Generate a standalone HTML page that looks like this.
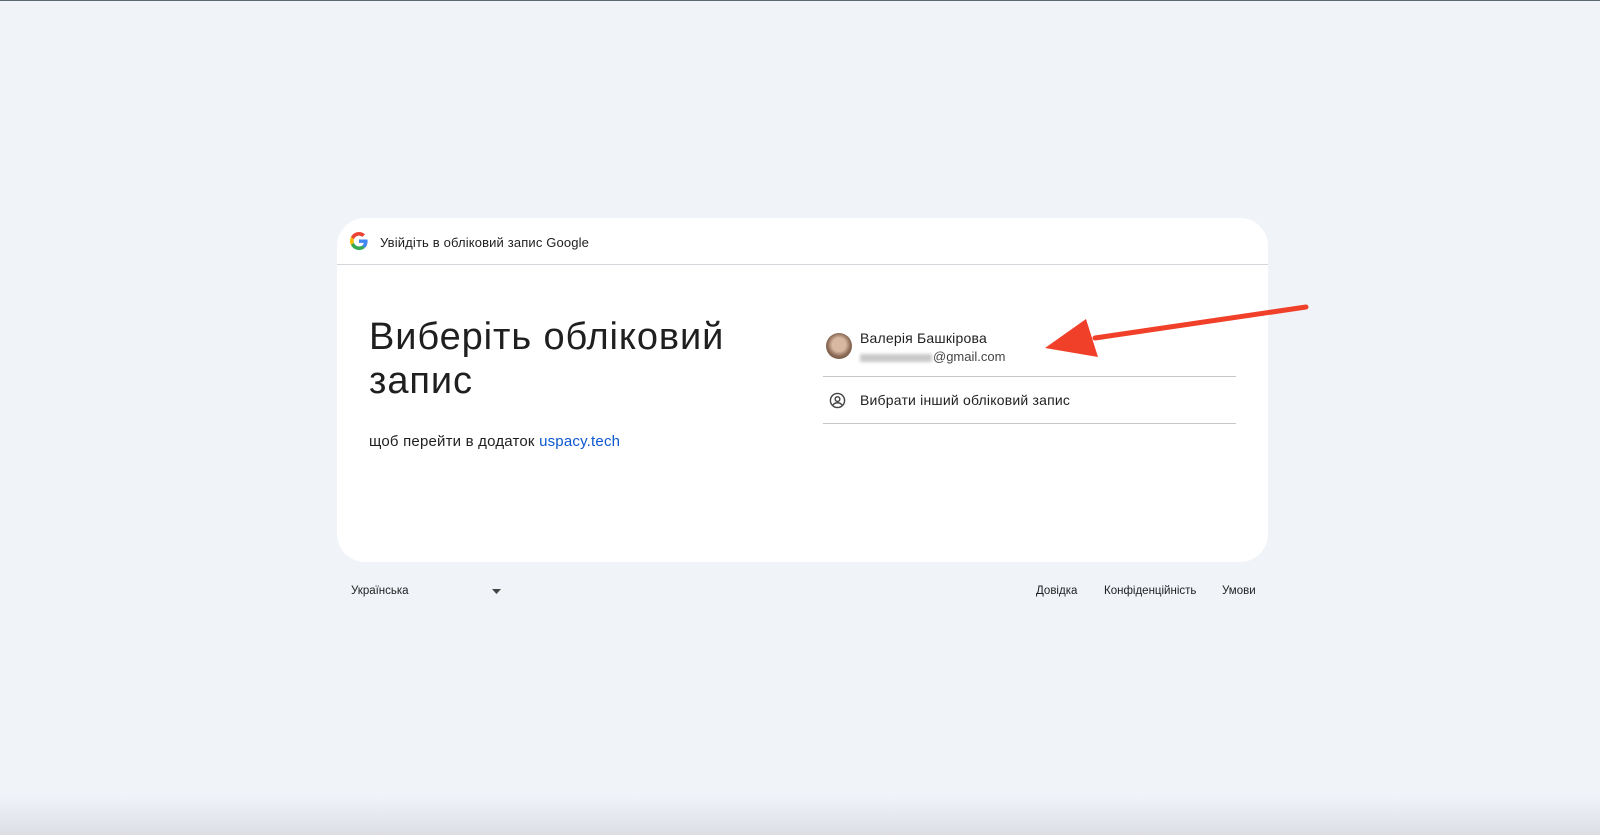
<!DOCTYPE html>
<html><head><meta charset="utf-8"><style>
html,body{margin:0;padding:0}
body{width:1600px;height:835px;background:#f0f4f9;position:relative;overflow:hidden;font-family:"Liberation Sans","Noto Sans CJK SC",sans-serif;color:#1f1f1f}
.topline{position:absolute;left:0;top:0;width:1600px;height:1px;background:#5a6a70}
.bottom{position:absolute;left:0;right:0;bottom:0;height:40px;background:linear-gradient(#f0f4f900,#dcdee4);}
.card{position:absolute;left:337px;top:218px;width:931px;height:344px;background:#fff;border-radius:28px}
.hdr{position:absolute;left:0;top:0;width:100%;height:46px;border-bottom:1px solid #d3d6da}
.hdr .t{position:absolute;left:43px;top:17px;font-size:13px;letter-spacing:0.15px;color:#1f1f1f}
.title{position:absolute;left:32px;top:97px;font-size:38px;line-height:44px;font-weight:400;letter-spacing:0.9px}
.sub{position:absolute;left:32px;top:215px;font-size:15px;letter-spacing:0.2px}
.sub span{color:#0b57d0}
.acc{position:absolute;left:486px;width:413px}
.row1{top:112px;height:46px;border-bottom:1px solid #c7c7c7}
.row2{top:159px;height:46px;border-bottom:1px solid #c7c7c7}
.av{position:absolute;left:3px;top:3px;width:26px;height:26px;border-radius:50%;background:radial-gradient(circle at 50% 45%,#d9b8a2 0 35%,#8a6a55 60%,#5b4436)}
.name{position:absolute;left:37px;top:0px;font-size:14px;font-weight:500;letter-spacing:0.2px}
.mail{position:absolute;left:37px;top:19px;font-size:13px;color:#444}
.blur{display:inline-block;width:72px;height:8px;background:#c9c9c9;filter:blur(1.5px);vertical-align:middle;margin-right:1px}
.ft{position:absolute;top:585px;font-size:11.5px;color:#1f1f1f}
</style></head><body>
<div class="topline"></div>
<div class="card">
 <div class="hdr">
  <svg style="position:absolute;left:13px;top:14px" width="18" height="18" viewBox="0 0 48 48">
   <path fill="#EA4335" d="M24 9.5c3.5 0 6.6 1.2 9.1 3.6l6.8-6.8C35.8 2.4 30.3 0 24 0 14.6 0 6.6 5.4 2.6 13.2l7.9 6.2C12.4 13.6 17.7 9.5 24 9.5z"/>
   <path fill="#4285F4" d="M46.9 24.5c0-1.6-.1-3.1-.4-4.5H24v9h12.9c-.6 3-2.3 5.5-4.8 7.2l7.700 6c4.5-4.2 7.1-10.3 7.1-17.700z"/>
   <path fill="#FBBC05" d="M10.5 28.6c-.5-1.4-.8-3-.8-4.600s.3-3.2.8-4.600l-7.900-6.200C.9 16.5 0 20.1 0 24s.9 7.5 2.6 10.8l7.900-6.200z"/>
   <path fill="#34A853" d="M24 48c6.5 0 11.9-2.1 15.9-5.8l-7.7-6c-2.2 1.5-5 2.3-8.2 2.3-6.3 0-11.6-4.2-13.5-9.9l-7.9 6.2C6.6 42.6 14.6 48 24 48z"/>
  </svg>
  <div class="t">Увійдіть в обліковий запис Google</div>
 </div>
 <div class="title">Виберіть обліковий<br>запис</div>
 <div class="sub">щоб перейти в додаток <span>uspacy.tech</span></div>
 <div class="acc row1">
  <div class="av"></div>
  <div class="name">Валерія Башкірова</div>
  <div class="mail"><span class="blur"></span>@gmail.com</div>
 </div>
 <div class="acc row2">
  <svg style="position:absolute;left:6px;top:15px" width="17" height="17" viewBox="0 0 24 24" fill="none" stroke="#444" stroke-width="2"><circle cx="12" cy="12" r="10"/><circle cx="12" cy="10" r="3.3"/><path d="M5.5 18.5c2-2.5 4-3.3 6.5-3.3s4.5.8 6.5 3.3"/></svg>
  <div class="name" style="top:15px">Вибрати інший обліковий запис</div>
 </div>
</div>
<div class="ft" style="left:351px">Українська</div>
<svg style="position:absolute;left:492px;top:589px" width="9" height="5"><path d="M0 0h9L4.5 5z" fill="#444"/></svg>
<div class="ft" style="left:1036px">Довідка</div>
<div class="ft" style="left:1104px">Конфіденційність</div>
<div class="ft" style="left:1222px">Умови</div>
<svg style="position:absolute;left:0;top:0" width="1600" height="835">
 <path d="M1306 307 L1095 338" stroke="#f0402a" stroke-width="5" stroke-linecap="round"/>
 <path d="M1045 348 L1086 319 L1098 357 Z" fill="#f0402a"/>
</svg>
<div class="bottom"></div>
</body></html>
